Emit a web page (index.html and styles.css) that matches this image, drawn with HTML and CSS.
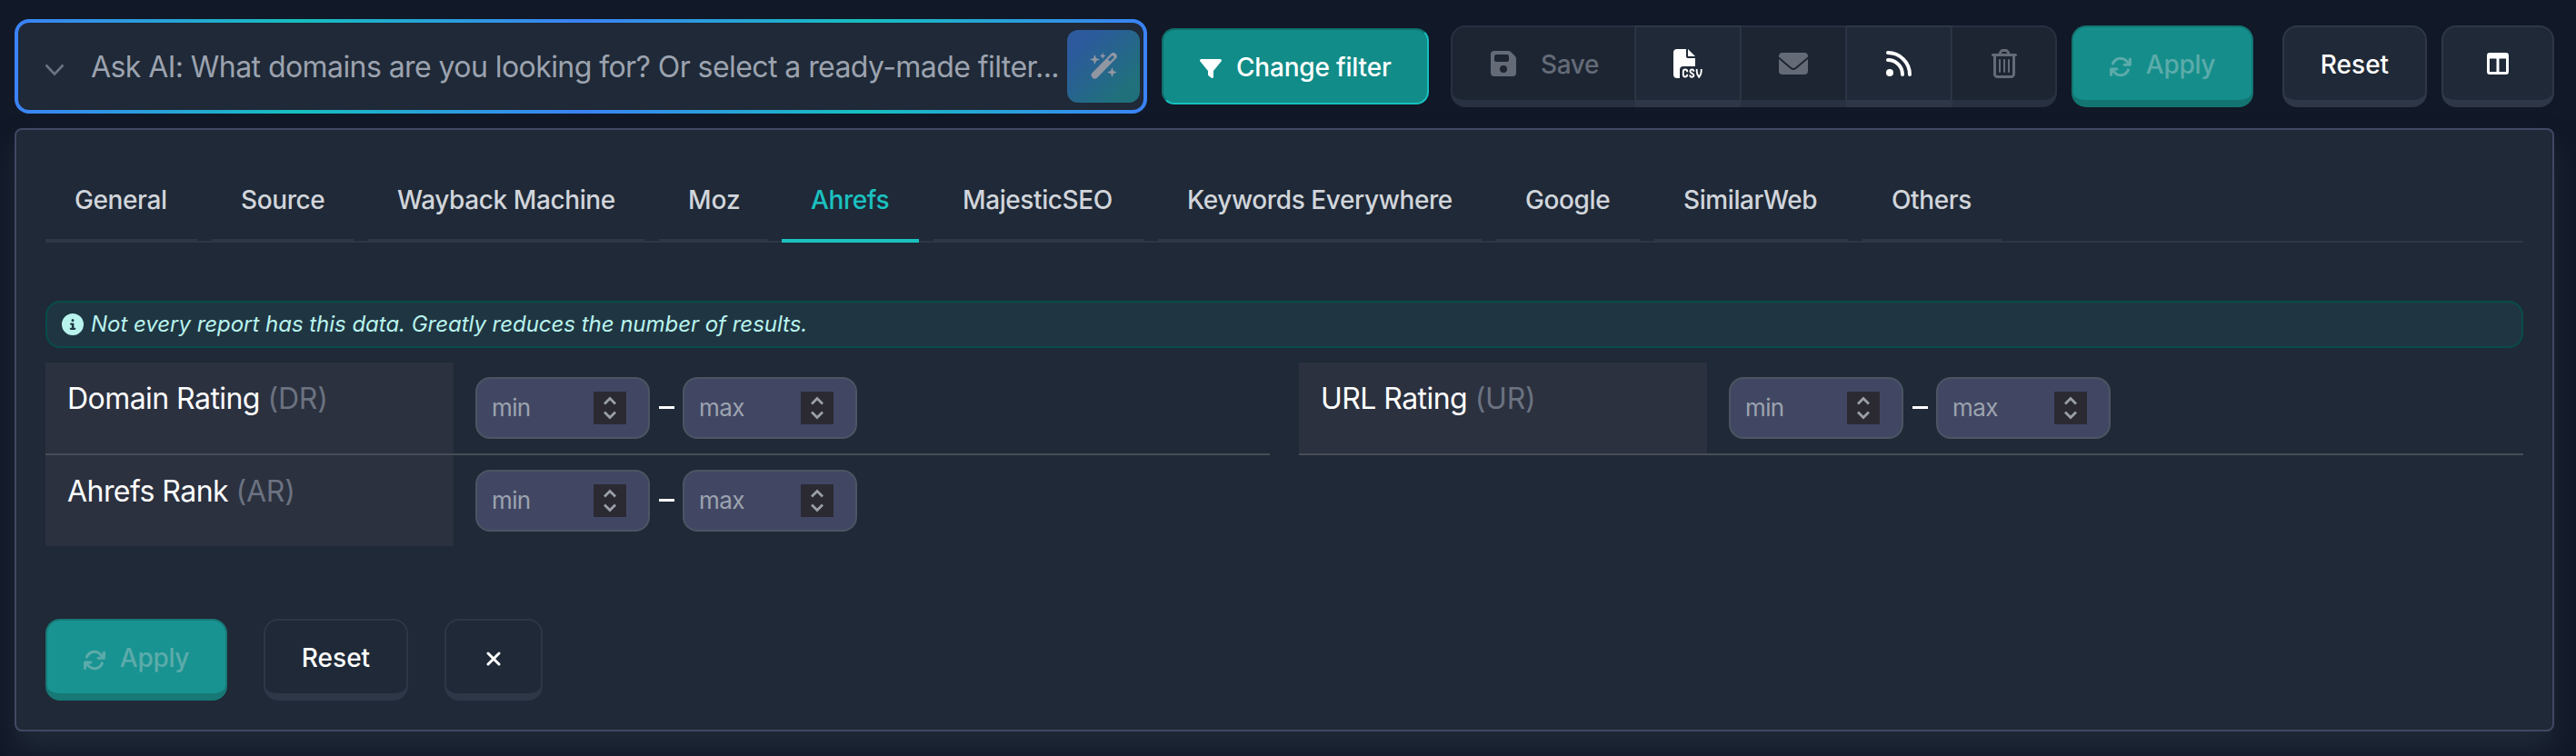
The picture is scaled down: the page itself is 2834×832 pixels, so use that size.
FILE: index.html
```
<!DOCTYPE html>
<html lang="en">
<head>
<meta charset="utf-8">
<title>Domain filters</title>
<link rel="stylesheet" href="styles.css">
</head>
<body>
<svg class="defs" width="0" height="0" aria-hidden="true">
  <symbol id="sync" viewBox="0 0 512 512"><path fill="currentColor" d="M105 203C126 143 184 99 251 99c45 0 85 19 114 49l39 39h-61a32 32 0 0 0 0 64h135a32 32 0 0 0 32-32V84a32 32 0 0 0-64 0v57l-37-38C368 60 312 35 251 35 156 35 75 95 44 181a32 32 0 0 0 61 22zM39 289a32 32 0 0 0-37 32v135a32 32 0 0 0 64 0v-60l36 37c41 40 97 64 154 64 95 0 176-60 207-146a32 32 0 1 0-60-22c-22 61-80 104-147 104-40 0-78-16-107-45l-38-35h57a32 32 0 0 0 0-64H39z"/></symbol>
  <symbol id="spin" viewBox="0 0 36 36"><rect width="36" height="36" fill="#2b2a33"/><path d="M12 13.500 18 7.500l6 6M12 22.500l6 6 6-6" fill="none" stroke="#9a9fa8" stroke-width="2.800"/></symbol>
</svg>
<header class="toolbar">
  <div class="ask">
    <svg class="chev" viewBox="0 0 22 14"><path d="M1.500 1.500 11 11.500 20.500 1.500" fill="none" stroke="#6b7280" stroke-width="2.600"/></svg>
    <span class="ask-text">Ask AI: What domains are you looking for? Or select a ready-made filter...</span>
    <button class="wand" aria-label="Generate"><svg viewBox="0 0 30 30"><g fill="currentColor"><path fill-rule="evenodd" d="M23.200 1.200a3.800 3.800 0 0 1 5.400 5.400L8.200 27.400a3.800 3.800 0 0 1-5.400-5.400zM20 7.500l2.200 2.200 4.700-4.600-2.100-2.200z"/><path d="M5.500 2 7 6l4 1.500L7 9l-1.500 4L4 9 0 7.500 4 6zM14.200 0l1 2.500 2.500 1-2.500 1-1 2.500-1-2.500-2.500-1 2.500-1zM24.500 16l1.500 4 4 1.500-4 1.500-1.500 4-1.500-4-4-1.500 4-1.500z"/></g></svg></button>
  </div>
  <button class="change"><svg viewBox="0 0 24 21"><path fill="currentColor" d="M1.700 0h20.600a1.600 1.600 0 0 1 1.300 2.600L15 13v6.500c0 1.200-1.200 1.800-2.200 1.200l-3-2.200c-.5-.4-.8-.9-.8-1.500v-4L.4 2.600A1.600 1.600 0 0 1 1.700 0z"/></svg><span>Change filter</span></button>
  <div class="group">
    <button class="btn save off"><svg class="i28" viewBox="0 0 28 28"><path fill="currentColor" fill-rule="evenodd" d="M4 0h15.500c1 0 2 .4 2.800 1.200l4.500 4.500c.8.800 1.200 1.800 1.200 2.800V24a4 4 0 0 1-4 4H4a4 4 0 0 1-4-4V4a4 4 0 0 1 4-4zm2 4a2 2 0 0 0-2 2v4a2 2 0 0 0 2 2h12a2 2 0 0 0 2-2V6a2 2 0 0 0-2-2zm8 20a4 4 0 1 0 0-8 4 4 0 0 0 0 8z"/></svg><span>Save</span></button>
    <button class="btn cell" aria-label="CSV"><svg class="i32" viewBox="0 0 32 32"><path fill="currentColor" d="M4 0h10v8c0 1.100.9 2 2 2h8v9H11a4 4 0 0 0-4 4v9H4a4 4 0 0 1-4-4V4a4 4 0 0 1 4-4zM16 0l8 8h-8z"/><path d="M15.200 25.200v-.5a2.200 2.200 0 0 0-4.400 0v3.600a2.200 2.200 0 0 0 4.400 0v-.5M22.300 24.700c0-2.800-3.900-2.800-3.900-.3 0 2.500 4 1.800 4 4.500 0 2.500-4.200 2.500-4.200-.4M25.700 22v2.600c0 2.400 1.100 4.700 2.500 6.400 1.400-1.700 2.500-4 2.500-6.400V22" fill="none" stroke="currentColor" stroke-width="1.900"/></svg></button>
    <button class="btn cell off" aria-label="Email"><svg class="i32" viewBox="0 0 32 32"><path fill="currentColor" d="M4 4h24a4 4 0 0 1 4 4v.5L18 20.200c-1.300 1.100-2.700 1.100-4 0L0 8.500V8a4 4 0 0 1 4-4zM0 11l12.800 10.800c2 1.600 4.400 1.600 6.400 0L32 11v13a4 4 0 0 1-4 4H4a4 4 0 0 1-4-4z"/></svg></button>
    <button class="btn cell" aria-label="RSS"><svg class="i28" viewBox="0 0 28 28"><circle cx="4" cy="24" r="4" fill="currentColor"/><path d="M2 10c8.800 0 16 7.200 16 16M2 2c13.200 0 24 10.800 24 24" fill="none" stroke="currentColor" stroke-width="4" stroke-linecap="round"/></svg></button>
    <button class="btn cell off" aria-label="Delete"><svg class="i32" viewBox="0 0 32 32"><path d="M3.500 6.500h25M10.500 6l2-3.500c.3-.6.8-1 1.500-1h4c.7 0 1.200.4 1.500 1l2 3.500M5.500 7v20.500a3 3 0 0 0 3 3h15a3 3 0 0 0 3-3V7" fill="none" stroke="currentColor" stroke-width="3" stroke-linecap="round"/><path d="M11 12v13M16 12v13M21 12v13" stroke="currentColor" stroke-width="2" stroke-linecap="round"/></svg></button>
  </div>
  <button class="btn apply"><svg><use href="#sync"/></svg><span>Apply</span></button>
  <button class="btn reset"><span>Reset</span></button>
  <button class="btn cols" aria-label="Columns"><svg viewBox="0 0 24 24"><path fill="currentColor" fill-rule="evenodd" d="M3 0h18a3 3 0 0 1 3 3v18a3 3 0 0 1-3 3H3a3 3 0 0 1-3-3V3a3 3 0 0 1 3-3zm0 6.500V21h7.500V6.500zm10.500 0V21H21V6.500z"/></svg></button>
</header>
<main class="panel">
  <nav class="tabs">
    <a class="tab t1">General</a><a class="tab t2">Source</a><a class="tab t3">Wayback Machine</a><a class="tab t4">Moz</a><a class="tab t5 active">Ahrefs</a><a class="tab t6">MajesticSEO</a><a class="tab t7">Keywords Everywhere</a><a class="tab t8">Google</a><a class="tab t9">SimilarWeb</a><a class="tab t10">Others</a>
  </nav>
  <p class="note"><svg viewBox="0 0 24 24"><path fill="currentColor" fill-rule="evenodd" d="M12 0a12 12 0 1 1 0 24 12 12 0 0 1 0-24zM10.100 10.500a1.100 1.100 0 0 0 0 2.200h.8v3h-1a1.100 1.100 0 0 0 0 2.300h4.300a1.100 1.100 0 0 0 0-2.300h-.8v-4.100c0-.6-.5-1.100-1.100-1.100zM12 9a1.500 1.500 0 1 0 0-3 1.500 1.500 0 0 0 0 3z"/></svg><em>Not every report has this data. Greatly reduces the number of results.</em></p>
  <section class="fields">
    <div class="field line"><div class="name"><span>Domain Rating</span> <span class="abbr">(DR)</span></div><div class="range"><div class="num"><span>min</span><svg><use href="#spin"/></svg></div><i class="dash"></i><div class="num"><span>max</span><svg><use href="#spin"/></svg></div></div></div>
    <div class="field line"><div class="name"><span>URL Rating</span> <span class="abbr">(UR)</span></div><div class="range"><div class="num"><span>min</span><svg><use href="#spin"/></svg></div><i class="dash"></i><div class="num"><span>max</span><svg><use href="#spin"/></svg></div></div></div>
    <div class="field"><div class="name"><span>Ahrefs Rank</span> <span class="abbr">(AR)</span></div><div class="range"><div class="num"><span>min</span><svg><use href="#spin"/></svg></div><i class="dash"></i><div class="num"><span>max</span><svg><use href="#spin"/></svg></div></div></div>
  </section>
  <footer class="actions">
    <button class="btn apply low"><svg><use href="#sync"/></svg><span>Apply</span></button>
    <button class="btn reset"><span>Reset</span></button>
    <button class="btn close" aria-label="Close"><svg viewBox="0 0 16 16"><path d="m2 2 12 12M14 2 2 14" stroke="currentColor" stroke-width="3" stroke-linecap="round"/></svg></button>
  </footer>
</main>
</body>
</html>
```
FILE: styles.css
```
* { box-sizing: border-box; }
body { margin: 0; height: 832px; overflow: hidden; background: #111827; color: #fff; font: 500 28px/40px Inter, sans-serif; padding: 21px 24px 0 16px; }
.defs { position: absolute; }
svg { display: block; flex: none; }
button { font: inherit; color: inherit; margin: 0; padding: 0; display: flex; align-items: center; }
.toolbar { display: flex; height: 104px; }
.ask { width: 1246px; height: 104px; border: 4px solid transparent; border-radius: 16px; display: flex; align-items: center; padding: 0 4px 0 29px; background: linear-gradient(#1f2937, #1f2937) padding-box, linear-gradient(90deg, #3b82f6, #16bfbf, #3b82f6, #16bfbf, #3b82f6) border-box; }
.chev { width: 22px; height: 14px; margin-top: 8px; }
.ask-text { font-size: 32px; font-weight: 400; color: #9ca3af; margin-left: 29px; width: 1074px; padding-top: 1px; white-space: nowrap; letter-spacing: -0.57px; }
.wand { width: 80px; height: 80px; flex: none; border: 0; border-radius: 12px; background: linear-gradient(135deg, #2c5a9c 20%, #20707c 80%); color: #9096a2; justify-content: center; }
.wand svg { width: 30px; height: 30px; }
.change { width: 294px; height: 84px; margin: 10px 0 0 16px; border: 2px solid; border-color: #0f6f6c #17c0bf #17c0bf #0f6f6c; border-radius: 14px; background: #128c88; padding-left: 40px; white-space: nowrap; letter-spacing: -0.2px; }
.change span { padding-top: 2px; }
.change svg { width: 24px; height: 21px; margin: 4px 16px 0 0; }
.group { display: flex; margin: 7px 0 0 24px; height: 90px; }
.btn { height: 90px; border: 2px solid #2d3748; border-bottom-width: 8px; border-radius: 16px; background: #1f2937; white-space: nowrap; justify-content: center; }
.btn span { padding-top: 2px; }
.group .btn { border-radius: 0; border-left-width: 1px; border-right-width: 1px; }
.group .btn:first-child { border-left-width: 2px; border-radius: 16px 0 0 16px; }
.group .btn:last-child { border-right-width: 2px; border-radius: 0 16px 16px 0; }
.group .off { background: #1d2533; border-color: #283141; color: #646b77; }
.group .save { width: 203px; justify-content: flex-start; padding-left: 42px; letter-spacing: -0.4px; }
.save svg { margin-right: 27px; }
.cell { width: 116px; }
.i28 { width: 28px; height: 28px; }
.i32 { width: 32px; height: 32px; }
.toolbar > .btn { margin-top: 7px; }
.apply { width: 200px; background: #158e8b; border-color: #137572; color: #5cabaa; letter-spacing: -0.3px; }
.apply svg { width: 24px; height: 24px; margin: 5px 16px 0 0; }
.apply.low { background: #199391; border-color: #177876; }
.toolbar .apply { margin-left: 16px; }
.toolbar .reset { margin-left: 32px; }
.reset { width: 159px; }
.cols { width: 124px; margin-left: 16px; }
.cols svg { width: 24px; height: 24px; }
.panel { margin-top: 16px; height: 664px; border: 2px solid #414763; border-radius: 8px; background: #1f2937; padding: 32px 32px 0; box-shadow: 0 20px 30px #1f2937; }
.tabs { display: flex; gap: 16px; height: 92px; border-bottom: 2px solid #2d3748; }
.tab { height: 92px; border-bottom: 4px solid #2d3748; color: #d1d5db; padding: 25px 0 0 32px; white-space: nowrap; flex: none; letter-spacing: -0.4px; }
.tab.active { color: #1bc1c1; border-color: #1bc1c1; }
.t1 { width: 167px; } .t2 { width: 156px; } .t3 { width: 304px; } .t4 { width: 119px; letter-spacing: 0; } .t5 { width: 151px; }
.t6 { width: 231px; } .t7 { width: 356px; } .t8 { width: 158px; } .t9 { width: 213px; } .t10 { width: 153px; }
.note { margin: 64px 0 0; height: 52px; border: 2px solid #084c4a; border-radius: 16px; background: #1f3642; color: #b9f3ee; display: flex; align-items: center; padding-left: 16px; font-size: 24px; font-weight: 400; letter-spacing: -0.03px; }
.note svg { width: 24px; height: 24px; margin-right: 8px; }
.fields { margin-top: 16px; display: grid; grid-template-columns: 1347px 1347px; column-gap: 32px; }
.field { display: flex; height: 100px; }
.line { height: 102px; border-bottom: 2px solid #484e57; }
.name { width: 449px; background: #2b313f; padding: 20px 0 0 24px; font-size: 32px; font-weight: 400; white-space: nowrap; letter-spacing: -0.55px; }
.abbr { color: #6b7280; letter-spacing: -0.2px; }
.range { display: flex; padding: 16px 0 0 24px; }
.num { width: 192px; height: 68px; border: 2px solid #4b5563; border-radius: 16px; background: #414763; display: flex; align-items: center; justify-content: space-between; padding: 0 24px 0 16px; color: #9ca3af; font-weight: 400; font-size: 26px; letter-spacing: -0.6px; }
.num svg { width: 36px; height: 36px; }
.dash { width: 17px; height: 3px; margin: 32px 9px 0 10px; background: #fff; }
.actions { display: flex; gap: 40px; margin-top: 80px; }
.close { width: 108px; }
.close svg { width: 16px; height: 16px; margin-top: 3px; }
```
